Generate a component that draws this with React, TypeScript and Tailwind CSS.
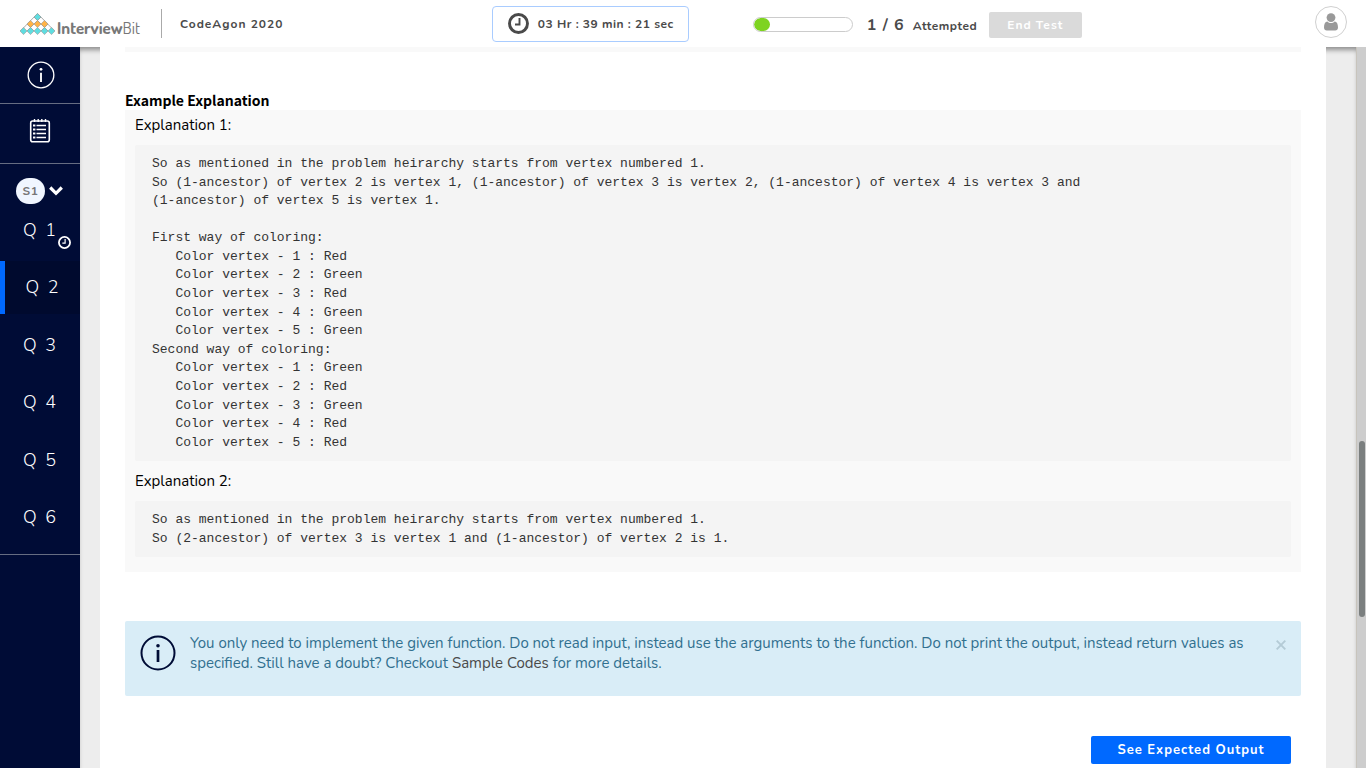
import React from "react";

const firstExplanation = `So as mentioned in the problem heirarchy starts from vertex numbered 1.
So (1-ancestor) of vertex 2 is vertex 1, (1-ancestor) of vertex 3 is vertex 2, (1-ancestor) of vertex 4 is vertex 3 and
(1-ancestor) of vertex 5 is vertex 1.

First way of coloring:
   Color vertex - 1 : Red
   Color vertex - 2 : Green
   Color vertex - 3 : Red
   Color vertex - 4 : Green
   Color vertex - 5 : Green
Second way of coloring:
   Color vertex - 1 : Green
   Color vertex - 2 : Red
   Color vertex - 3 : Green
   Color vertex - 4 : Red
   Color vertex - 5 : Red`;

const secondExplanation = `So as mentioned in the problem heirarchy starts from vertex numbered 1.
So (2-ancestor) of vertex 3 is vertex 1 and (1-ancestor) of vertex 2 is 1.`;

function ClockIcon({ className }: { className: string }) {
  return (
    <svg viewBox="0 0 21 21" className={className} fill="none" stroke="currentColor" aria-hidden="true">
      <circle cx="10.5" cy="10.5" r="9" strokeWidth="2.9" />
      <path d="M11.5 5v6.5H7" strokeWidth="1.9" />
    </svg>
  );
}

function InfoIcon({ className, ring, stem }: { className: string; ring: number; stem: number }) {
  return (
    <svg viewBox="0 0 36 36" className={className} fill="none" stroke="currentColor" aria-hidden="true">
      <circle cx="18" cy="18" r="16.5" strokeWidth={ring} />
      <path d="M18 15v12" strokeWidth={stem} />
      <circle cx="18" cy="10.7" r="1.8" fill="currentColor" stroke="none" />
    </svg>
  );
}

function NotepadIcon() {
  return (
    <svg viewBox="0 0 22 25" className="h-[25px] w-[22px]" fill="none" stroke="currentColor" aria-hidden="true">
      <rect x="1.7" y="3" width="18.6" height="20.8" rx="2" strokeWidth="1.6" />
      <path d="M5.5 1v3M9.2 1v3M12.8 1v3M16.5 1v3" strokeWidth="1.4" />
      <path d="M7.5 7.5h9.5M7.5 11.5h9.5M7.5 15.5h9.5M7.5 19.5h9.5" strokeWidth="1.6" />
      <path d="M4 7.5h2.4M4 11.5h2.4M4 15.5h2.4M4 19.5h2.4" strokeWidth="2.2" />
    </svg>
  );
}

function LogoMark() {
  const rows = [
    { y: 4, xs: [17.5], fill: "#5fdde0" },
    { y: 11, xs: [10.5, 17.5, 24.5], fill: "#ffb347" },
    { y: 18, xs: [3.5, 10.5, 17.5, 24.5, 31.5], fill: "#5fdde0" },
  ];
  return (
    <svg viewBox="0 0 35 22" className="h-[22px] w-[35px] shrink-0" aria-hidden="true">
      <path
        d="M17.5 .5 L.5 18 M17.5 .5 L34.5 18 M14 4 L28 18 M7 11 L14 18 M21 4 L7 18 M28 11 L21 18"
        stroke="#aaa"
        strokeWidth="1"
        fill="none"
      />
      {rows.map((row) =>
        row.xs.map((x) => (
          <path
            key={`${x}-${row.y}`}
            d={`M${x} ${row.y - 3.6}l3.5 3.6l-3.5 3.6l-3.5 -3.6z`}
            fill={row.fill}
            stroke="#999"
            strokeWidth=".6"
          />
        )),
      )}
    </svg>
  );
}

function Header() {
  return (
    <header className="flex h-[47px] shrink-0 items-center bg-white font-bold text-[#4a4a4a]">
      <div className="flex w-[36%] items-center pl-5">
        <a href="#home" aria-label="InterviewBit" className="flex w-[122px] items-center gap-[2px] text-[#777]">
          <LogoMark />
          <span className="mt-2 font-[Dosis,sans-serif] text-[17px] leading-5">
            Interview<span className="font-normal">Bit</span>
          </span>
        </a>
        <div className="ml-[19px] h-[29px] border-l border-[#aaa]" />
        <h1 className="ml-[18px] text-[12px] tracking-[1px]">CodeAgon 2020</h1>
      </div>
      <div className="flex h-9 w-[197px] items-center gap-[9px] rounded border border-[#a9ccff] pl-[15px] text-[12px] tracking-[0.5px] whitespace-nowrap">
        <ClockIcon className="size-[21px] shrink-0" />
        <span>03 Hr : 39 min : 21 sec</span>
      </div>
      <div className="ml-16 flex items-center pt-[2px]">
        <div className="h-[15px] w-[100px] overflow-hidden rounded-full border border-[#ccc]">
          <div className="h-full w-1/6 rounded-full bg-[#7ed321]" />
        </div>
        <span className="ml-[14px] w-[46px] text-[16px] tracking-[1px] whitespace-nowrap">1 / 6</span>
        <span className="mt-[2px] w-[76px] text-[12px] tracking-[0.5px]">Attempted</span>
        <button className="h-[26px] w-[93px] rounded-[2px] bg-[#dadada] text-[12px] tracking-[1px] text-white">
          End Test
        </button>
      </div>
      <button
        aria-label="Account"
        className="mr-[19px] mb-[3px] ml-auto flex size-8 items-center justify-center rounded-full border border-[#d0d0d0] text-[#999]"
      >
        <svg viewBox="0 0 14 18" className="h-[18px] w-[14px]" fill="currentColor" aria-hidden="true">
          <circle cx="7" cy="4.6" r="4.4" />
          <path d="M3.4 8.4C1 8.6 0 11 0 14.6C0 16.5 1.2 17.6 2.8 17.6h8.4c1.6 0 2.8-1.1 2.8-3C14 11 13 8.6 10.6 8.4C9.6 9.4 8.4 9.9 7 9.9S4.4 9.4 3.4 8.4z" />
        </svg>
      </button>
    </header>
  );
}

function QuestionLink({ number }: { number: number }) {
  const active = number === 2;
  return (
    <a
      href={`#question-${number}`}
      className={
        active
          ? "relative flex h-[53px] items-center justify-center border-l-[5px] border-[#0069ff] bg-[#000a2e]"
          : "relative flex h-[53px] items-center justify-center"
      }
    >
      <span className="text-[18px] tracking-[1px] [word-spacing:2px]">Q {number}</span>
      {number === 1 && <ClockIcon className="absolute right-[9px] bottom-2 size-[13px]" />}
    </a>
  );
}

function Sidebar() {
  return (
    <nav className="w-20 shrink-0 bg-[#000c36] text-white">
      <a href="#info" aria-label="Test information" className="flex h-[57px] items-center justify-center border-b border-[#666d82] pl-[2px]">
        <InfoIcon className="size-7" ring={1.7} stem={2.4} />
      </a>
      <a href="#problems" aria-label="All problems" className="flex h-[60px] items-center justify-center border-b border-[#666d82] pb-[6px]">
        <NotepadIcon />
      </a>
      <div className="border-b border-[#666d82] pt-[14px] pb-[10px]">
        <button className="flex w-full items-center gap-1 pl-4">
          <span className="flex h-[26px] w-[29px] items-center justify-center rounded-full bg-[#f0f6ff] text-[12px] font-bold tracking-[0.5px] text-[#777]">
            S1
          </span>
          <svg viewBox="0 0 14 10" className="h-[10px] w-[14px]" fill="none" stroke="currentColor" strokeWidth="3.2" aria-hidden="true">
            <path d="M1.2 1.5L7 7.3L12.8 1.5" />
          </svg>
        </button>
        <div className="flex h-[340px] flex-col justify-between font-light">
          {[1, 2, 3, 4, 5, 6].map((n) => (
            <QuestionLink key={n} number={n} />
          ))}
        </div>
      </div>
    </nav>
  );
}

function CodeBlock({ children }: { children: string }) {
  return (
    <pre className="overflow-hidden rounded-[2px] bg-[#f4f4f4] px-[17px] pt-[10px] pb-[9px] font-['Liberation_Mono',monospace] text-[13px] leading-[1.43] text-[#333]">
      {children}
    </pre>
  );
}

export default function App() {
  return (
    <div className="flex h-screen flex-col overflow-hidden font-[Nunito,Lato,sans-serif]">
      <Header />
      <div className="flex min-h-0 flex-1">
        <Sidebar />
        <div className="flex min-w-0 flex-1 bg-[#ededed] pr-[30px] pl-5 shadow-[inset_0_5px_5px_-2px_rgba(0,0,0,0.4)]">
          <main className="min-w-0 flex-1 bg-white px-[25px]">
            <div className="h-[5px] bg-[#f9f9f9]" />
            <h2 className="mt-[39px] font-['Source_Sans_Pro','Noto_Sans_CJK_SC',sans-serif] text-[14px] leading-[19px] font-bold text-black">
              Example Explanation
            </h2>
            <section className="bg-[#f9f9f9] px-[10px] pt-[5px] pb-[15px] text-[15px] leading-5 text-black">
              <p className="mb-[10px]">Explanation 1:</p>
              <CodeBlock>{firstExplanation}</CodeBlock>
              <p className="my-[10px]">Explanation 2:</p>
              <CodeBlock>{secondExplanation}</CodeBlock>
            </section>
            <aside className="mt-[49px] flex h-[75px] items-start rounded-[2px] bg-[#d9edf7] px-[15px] pt-3 text-[15px] leading-5 text-[#31708f]">
              <InfoIcon className="mt-[2px] mr-[14px] size-9 shrink-0 text-[#000c36]" ring={2} stem={2.7} />
              <p className="flex-1">
                You only need to implement the given function. Do not read input, instead use the arguments to the
                function. Do not print the output, instead return values as specified. Still have a doubt? Checkout{" "}
                <a href="#samples" className="text-[#4a4a4a]">
                  Sample Codes
                </a>{" "}
                for more details.
              </p>
              <button aria-label="Close" className="mt-[7px] ml-8 text-[#b4cbd6]">
                <svg viewBox="0 0 10 10" className="size-[10px]" stroke="currentColor" strokeWidth="1.9" aria-hidden="true">
                  <path d="M.7 .7L9.3 9.3M9.3 .7L.7 9.3" />
                </svg>
              </button>
            </aside>
            <div className="mt-10 flex justify-end pr-[10px]">
              <button className="h-7 w-[200px] rounded-[2px] bg-[#0069ff] text-[13px] font-bold tracking-[1px] text-white">
                See Expected Output
              </button>
            </div>
          </main>
        </div>
        <div className="w-[10px] shrink-0 border-l border-[#c8c4bc] bg-[#cdcdcd] pl-[2px]" aria-hidden="true">
          <div className="mt-[394px] h-[176px] w-[6px] rounded-full bg-[#7b7f7f]" />
        </div>
      </div>
    </div>
  );
}
